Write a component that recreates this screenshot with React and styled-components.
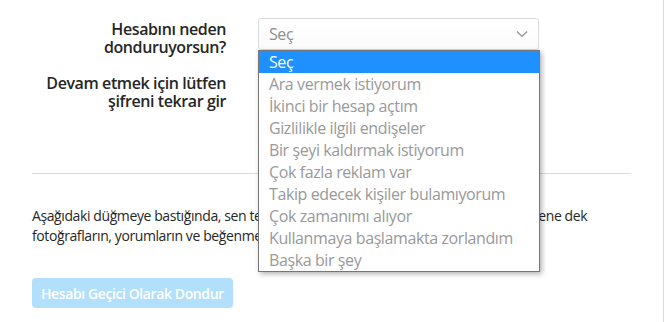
import React from 'react';
import styled, { createGlobalStyle } from 'styled-components';

const GlobalStyle = createGlobalStyle`
  body {
    margin: 0;
    background: #fff;
    font-family: 'Open Sans', 'Liberation Sans', sans-serif;
    letter-spacing: -0.025em;
    color: #262626;
  }
`;

const Page = styled.main`
  width: 664px;
  height: 322px;
  box-sizing: border-box;
  border-right: 1px solid #dbdbdb;
  padding: 18px 32px 0 32px;
  overflow: hidden;
`;

const FormRow = styled.div`
  display: grid;
  grid-template-columns: 194px 281px;
  column-gap: 32px;
  align-items: start;
  margin-bottom: ${p => p.$gap || 16}px;
`;

const Label = styled.label`
  text-align: right;
  font-size: 16px;
  font-weight: 600;
  line-height: 18px;
  padding-top: 2px;
`;

const SelectWrap = styled.div`
  position: relative;
`;

const SelectBox = styled.div`
  height: 32px;
  box-sizing: border-box;
  border: 1px solid #dbdbdb;
  border-radius: 3px;
  background: linear-gradient(#fff, #fafafa);
  display: flex;
  align-items: center;
  justify-content: space-between;
  padding: 0 10px;
  font-size: 16px;
  color: #8e8e8e;
`;

const Chevron = () => (
  <svg width="12" height="8" viewBox="0 0 12 8">
    <path d="M1 1.5 L6 6.5 L11 1.5" fill="none" stroke="#8e8e8e" strokeWidth="1.2" />
  </svg>
);

const Listbox = styled.ul`
  position: absolute;
  top: 32px;
  left: 0;
  width: 282px;
  box-sizing: border-box;
  margin: 0;
  padding: 0;
  list-style: none;
  background: #fff;
  border: 1px solid #767676;
  box-shadow: 2px 2px 5px rgba(0, 0, 0, 0.3);
  z-index: 2;
`;

const Option = styled.li`
  height: 22px;
  line-height: 22px;
  padding: 0 10px;
  font-size: 16px;
  white-space: nowrap;
  color: ${p => (p.$active ? '#fff' : '#999')};
  background: ${p => (p.$active ? '#1e90ff' : 'transparent')};
`;

const PasswordInput = styled.input`
  height: 32px;
  box-sizing: border-box;
  border: 1px solid #dbdbdb;
  border-radius: 3px;
  background: #fafafa;
  width: 100%;
`;

const Divider = styled.hr`
  border: 0;
  border-top: 1px solid #dbdbdb;
  margin: 0 0 32px 0;
`;

const Notice = styled.p`
  margin: 0 0 32px 0;
  font-size: 14px;
  line-height: 20px;
  color: #262626;
`;

const FreezeButton = styled.button`
  font-family: inherit;
  letter-spacing: inherit;
  font-size: 14px;
  font-weight: 600;
  color: #fff;
  background: #b2dffc;
  border: 0;
  border-radius: 4px;
  height: 30px;
  padding: 0 9px;
  cursor: default;
`;

const reasons = [
  'Seç',
  'Ara vermek istiyorum',
  'İkinci bir hesap açtım',
  'Gizlilikle ilgili endişeler',
  'Bir şeyi kaldırmak istiyorum',
  'Çok fazla reklam var',
  'Takip edecek kişiler bulamıyorum',
  'Çok zamanımı alıyor',
  'Kullanmaya başlamakta zorlandım',
  'Başka bir şey',
];

export default function App() {
  return (
    <>
      <GlobalStyle />
      <Page>
        <FormRow>
          <Label>Hesabını neden donduruyorsun?</Label>
          <SelectWrap>
            <SelectBox>
              <span>Seç</span>
              <Chevron />
            </SelectBox>
            <Listbox>
              {reasons.map((r, i) => (
                <Option key={r} $active={i === 0}>{r}</Option>
              ))}
            </Listbox>
          </SelectWrap>
        </FormRow>
        <FormRow $gap={63}>
          <Label>Devam etmek için lütfen şifreni tekrar gir</Label>
          <PasswordInput type="password" />
        </FormRow>
        <Divider />
        <Notice>
          Aşağıdaki düğmeye bastığında, sen tekrar giriş yaparak hesabını yeniden etkinleştirene dek
          fotoğrafların, yorumların ve beğenmelerin gizlenecek.
        </Notice>
        <FreezeButton>Hesabı Geçici Olarak Dondur</FreezeButton>
      </Page>
    </>
  );
}
